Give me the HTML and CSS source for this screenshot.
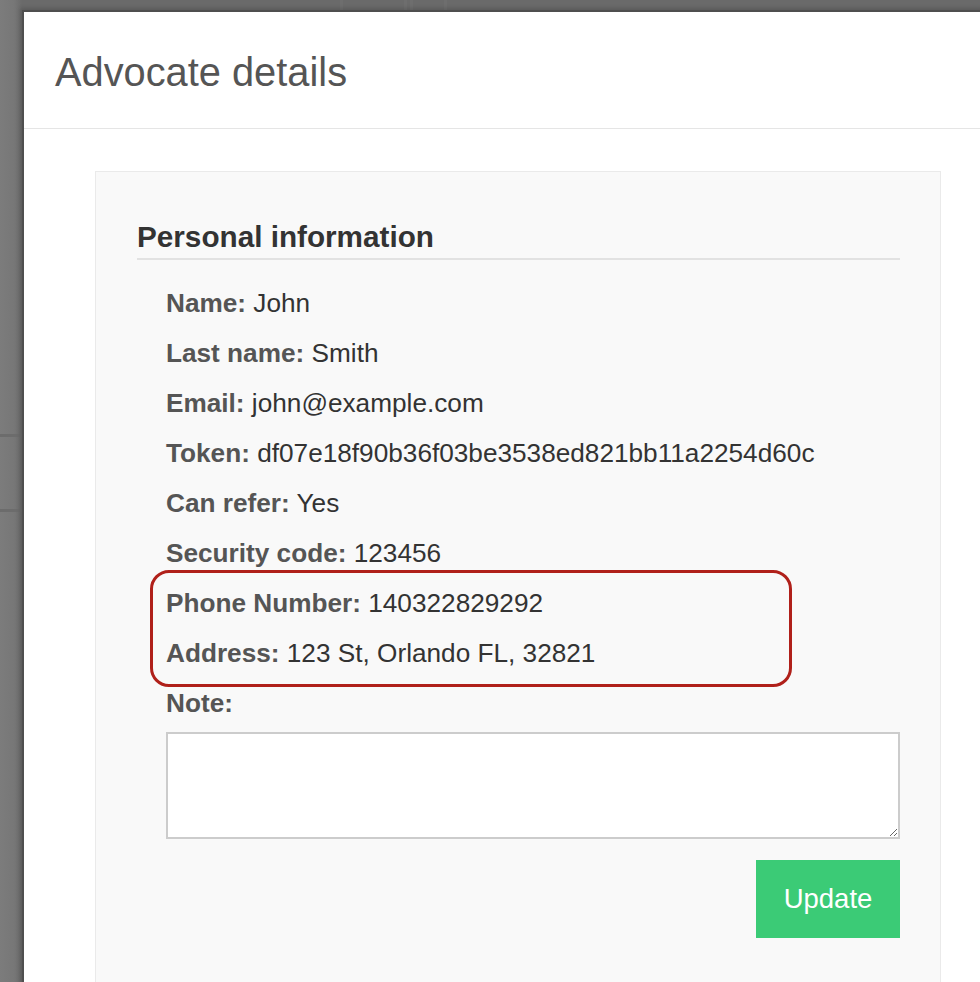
FILE: index.html
```html
<!DOCTYPE html>
<html>
<head>
<meta charset="utf-8">
<link rel="stylesheet" href="styles.css">
</head>
<body>
<div class="backdrop">
  <div class="bg-lines">
    <span class="vl vl1"></span><span class="vl vl2"></span><span class="vl vl3"></span><span class="vl vl4"></span>
    <span class="hl hl1"></span><span class="hl hl2"></span>
  </div>
  <div class="modal">
    <div class="modal-header">
      <h2 class="modal-title">Advocate details</h2>
    </div>
    <div class="modal-body">
      <div class="panel">
        <h3 class="section-title">Personal information</h3>
        <div class="rows">
          <div class="row"><b>Name:</b> John</div>
          <div class="row"><b>Last name:</b> Smith</div>
          <div class="row"><b>Email:</b> john@example.com</div>
          <div class="row"><b>Token:</b> df07e18f90b36f03be3538ed821bb11a2254d60c</div>
          <div class="row"><b>Can refer:</b> Yes</div>
          <div class="row"><b>Security code:</b> 123456</div>
          <div class="highlight">
            <div class="row"><b>Phone Number:</b> 140322829292</div>
            <div class="row"><b>Address:</b> 123 St, Orlando FL, 32821</div>
          </div>
          <div class="row"><b>Note:</b></div>
          <textarea class="note"></textarea>
          <div class="actions">
            <button class="btn-update">Update</button>
          </div>
        </div>
      </div>
    </div>
  </div>
</div>
</body>
</html>
```

FILE: styles.css
```css
html, body {
  margin: 0;
  padding: 0;
  width: 980px;
  height: 982px;
  overflow: hidden;
}
body {
  font-family: "Liberation Sans", Arial, sans-serif;
  background: #7a7a7a;
}
.backdrop {
  position: relative;
  width: 980px;
  height: 982px;
  background: linear-gradient(to right, #7c7c7c 0, #777 14px, #6a6a6a 22px);
  overflow: hidden;
}
.bg-lines .vl {
  position: absolute;
  top: 0;
  height: 11px;
  width: 3px;
  background: #6e6e6e;
}
.vl1 { left: 340px; }
.vl2 { left: 404px; }
.vl3 { left: 410px; width: 2px; }
.vl4 { left: 444px; width: 2px; }
.bg-lines .hl {
  position: absolute;
  left: 0;
  width: 23px;
  height: 3px;
  background: #6c6c6c;
}
.hl1 { top: 434px; }
.hl2 { top: 509px; }
.modal {
  position: absolute;
  left: 22px;
  top: 10px;
  width: 1000px;
  height: 1000px;
  background: #fff;
  border-left: 2px solid #4f4f4f;
  border-top: 2px solid #4f4f4f;
  box-shadow: -2px -2px 4px rgba(0,0,0,0.15);
}
.modal-header {
  height: 117px;
  border-bottom: 1px solid #e5e5e5;
  box-sizing: border-box;
  padding: 37px 0 0 31px;
}
.modal-title {
  margin: 0;
  font-size: 39.8px;
  line-height: 46px;
  font-weight: normal;
  color: #555;
}
.modal-body {
  padding: 42px 0 0 71px;
}
.panel {
  width: 846px;
  box-sizing: border-box;
  height: 900px;
  background: #f9f9f9;
  border: 1px solid #eaeaea;
  padding: 47px 40px 0 41px;
}
.section-title {
  margin: 0;
  font-size: 29.7px;
  line-height: 36px;
  font-weight: bold;
  color: #333;
  padding-bottom: 3px;
  border-bottom: 2px solid #e2e2e2;
}
.rows {
  padding: 18px 0 0 29px;
  display: flex;
  flex-direction: column;
}
.row {
  font-size: 26.2px;
  line-height: 50px;
  color: #333;
  white-space: nowrap;
}
.row b {
  color: #555;
}
.highlight {
  position: relative;
}
.highlight::before {
  content: "";
  position: absolute;
  left: -16px;
  top: -8px;
  width: 642px;
  height: 117px;
  box-sizing: border-box;
  border: 3px solid #b0201a;
  border-radius: 19px;
  pointer-events: none;
}
.note {
  display: block;
  margin-top: 4px;
  width: 734px;
  height: 107px;
  box-sizing: border-box;
  border: 2px solid #cccccc;
  background: #fff;
  resize: both;
  font-family: inherit;
  outline: none;
}
.actions {
  display: flex;
  justify-content: flex-end;
  width: 734px;
  margin-top: 21px;
}
.btn-update {
  width: 144px;
  height: 78px;
  border: none;
  background: #3bcb76;
  color: #fff;
  font-family: "Liberation Sans", Arial, sans-serif;
  font-size: 27.5px;
  padding: 0;
  cursor: pointer;
}
```
